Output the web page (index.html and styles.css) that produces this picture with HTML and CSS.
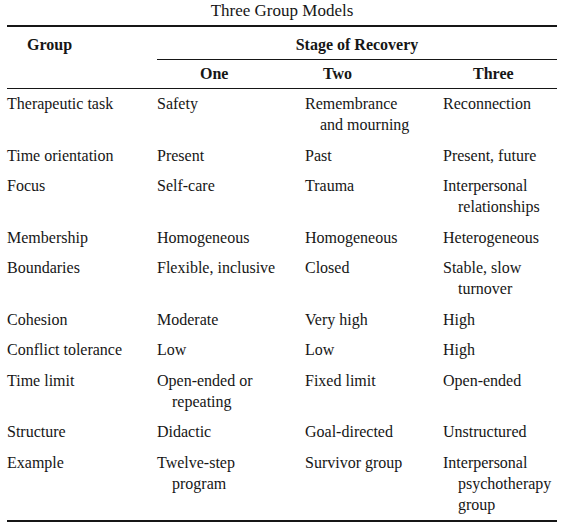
FILE: index.html
```html
<!DOCTYPE html>
<html lang="en">
<head>
    <meta charset="UTF-8">
    <meta name="viewport" content="width=device-width, initial-scale=1.0">
    <title>Three Group Models</title>
    <link rel="stylesheet" href="styles.css">
</head>
<body>
    <table class="models">
        <caption>Three Group Models</caption>
        <colgroup>
            <col class="col-label">
            <col class="col-one">
            <col class="col-two">
            <col class="col-three">
        </colgroup>
        <thead>
            <tr>
                <th class="group" rowspan="2">Group</th>
                <th class="stage" colspan="3">Stage of Recovery</th>
            </tr>
            <tr>
                <th class="stage-one">One</th>
                <th class="stage-two">Two</th>
                <th class="stage-three">Three</th>
            </tr>
        </thead>
        <tbody>
            <tr>
                <td>Therapeutic task</td>
                <td>Safety</td>
                <td>Remembrance<br>and mourning</td>
                <td>Reconnection</td>
            </tr>
            <tr>
                <td>Time orientation</td>
                <td>Present</td>
                <td>Past</td>
                <td>Present, future</td>
            </tr>
            <tr>
                <td>Focus</td>
                <td>Self-care</td>
                <td>Trauma</td>
                <td>Interpersonal<br>relationships</td>
            </tr>
            <tr>
                <td>Membership</td>
                <td>Homogeneous</td>
                <td>Homogeneous</td>
                <td>Heterogeneous</td>
            </tr>
            <tr>
                <td>Boundaries</td>
                <td>Flexible, inclusive</td>
                <td>Closed</td>
                <td>Stable, slow<br>turnover</td>
            </tr>
            <tr>
                <td>Cohesion</td>
                <td>Moderate</td>
                <td>Very high</td>
                <td>High</td>
            </tr>
            <tr>
                <td>Conflict tolerance</td>
                <td>Low</td>
                <td>Low</td>
                <td>High</td>
            </tr>
            <tr>
                <td>Time limit</td>
                <td>Open-ended or<br>repeating</td>
                <td>Fixed limit</td>
                <td>Open-ended</td>
            </tr>
            <tr>
                <td>Structure</td>
                <td>Didactic</td>
                <td>Goal-directed</td>
                <td>Unstructured</td>
            </tr>
            <tr>
                <td>Example</td>
                <td>Twelve-step<br>program</td>
                <td>Survivor group</td>
                <td>Interpersonal<br>psychotherapy<br>group</td>
            </tr>
        </tbody>
    </table>
</body>
</html>
```

FILE: styles.css
```css
body {
    font-family: 'Liberation Serif', 'Times New Roman', serif;
    font-size: 16px;
    background-color: #fff;
    color: #161616;
    padding: 0 6px 0 7px;
    margin: 0;
}
.models {
    width: 550px;
    border-collapse: collapse;
    table-layout: fixed;
}
caption {
    font-size: 17px;
    line-height: 20px;
    padding: 1px 0 4px;
    text-align: center;
}
.col-label {
    width: 150px;
}
.col-one {
    width: 148px;
}
.col-two {
    width: 138px;
}
.col-three {
    width: 114px;
}
th {
    font-weight: bold;
    line-height: 21px;
    padding: 0;
}
thead tr:first-child th {
    border-top: 2px solid #161616;
}
thead tr:last-child th,
.group {
    border-bottom: 1.5px solid #161616;
}
.group {
    text-align: left;
    vertical-align: top;
    padding: 7px 0 0 20px;
}
.stage {
    text-align: center;
    padding: 7px 0 4px;
    border-bottom: 1px solid #161616;
}
.stage-one,
.stage-two,
.stage-three {
    text-align: left;
    padding: 2.5px 0 4.5px;
}
.stage-one {
    padding-left: 43px;
}
.stage-two {
    padding-left: 18px;
}
.stage-three {
    padding-left: 30px;
}
td {
    vertical-align: top;
    line-height: 21px;
    padding: 4px 0 5.5px 15px;
    text-indent: -15px;
    white-space: nowrap;
}
tbody tr:last-child td {
    border-bottom: 2px solid #161616;
}
```
